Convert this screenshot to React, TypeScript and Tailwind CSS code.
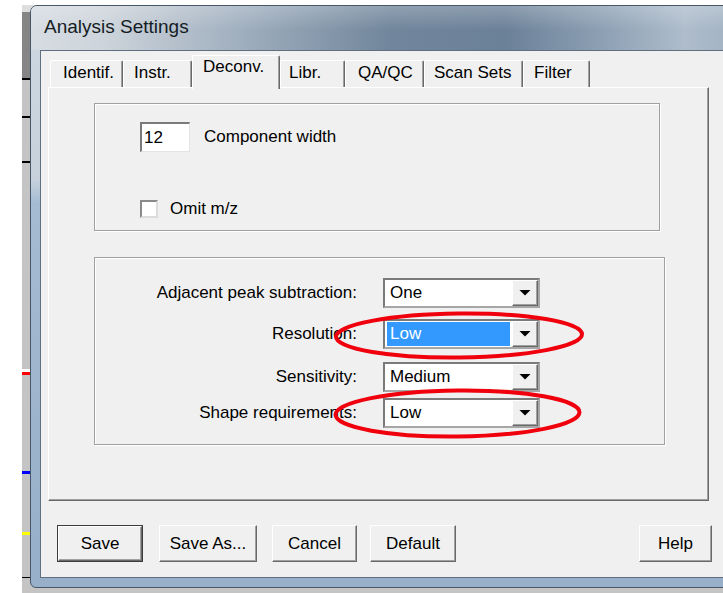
import React from "react";

type Tab = { label: string; cls: string; active?: boolean };

const tabs: Tab[] = [
  { label: "Identif.", cls: "w-[73px] pl-[12px]" },
  { label: "Instr.", cls: "w-[69px] pl-[10px]" },
  { label: "Deconv.", cls: "w-[88px] pl-[10px]", active: true },
  { label: "Libr.", cls: "w-[65px] pl-[8px]" },
  { label: "QA/QC", cls: "w-[79px] pl-[12px]" },
  { label: "Scan Sets", cls: "w-[99px] pl-[9px]" },
  { label: "Filter", cls: "w-[67px] pl-[10px]" },
];

const raised =
  "border border-t-white border-l-white border-r-[#696969] border-b-[#696969] shadow-[inset_-1px_-1px_0_#a0a0a0] bg-[#f0f0f0]";

function TabButton({ tab }: { tab: Tab }) {
  if (tab.active) {
    return (
      <div
        className={`${tab.cls} relative z-10 h-[34px] -mb-[2px] rounded-t-[2px] border-t border-l border-white border-r border-r-[#696969] shadow-[inset_-1px_0_0_#a0a0a0] bg-[#f0f0f0] pt-[1px] leading-[20px]`}
      >
        {tab.label}
      </div>
    );
  }
  return (
    <div
      className={`${tab.cls} h-[27px] rounded-t-[2px] border-t border-l border-white border-r border-r-[#696969] shadow-[inset_-1px_0_0_#a0a0a0] bg-[#f0f0f0] pt-[2px] leading-[20px]`}
    >
      {tab.label}
    </div>
  );
}

function Combo({ value, selected }: { value: string; selected?: boolean }) {
  return (
    <div className="ml-[26px] w-[157px] h-[30px] flex border-2 border-t-[#7a7a7a] border-l-[#7a7a7a] border-r-[#a6a6a6] border-b-[#a6a6a6] bg-white">
      <div className="flex-1 flex">
        {selected ? (
          <div className="flex-1 mx-[2px] my-[1px] bg-[#3399ff] text-white pl-[3px] flex items-center">
            {value}
          </div>
        ) : (
          <div className="flex-1 pl-[5px] flex items-center">{value}</div>
        )}
      </div>
      <div className={`w-[26px] h-full flex items-center justify-center ${raised}`}>
        <svg width="12" height="6" viewBox="0 0 12 6">
          <path d="M0.5 0H11.5L6 5.5Z" fill="#000" />
        </svg>
      </div>
    </div>
  );
}

function Row({ label, children, cls }: { label: string; children: React.ReactNode; cls: string }) {
  return (
    <div className={`flex items-center h-[30px] ${cls}`}>
      <div className="w-[262px] text-right">{label}</div>
      {children}
    </div>
  );
}

function Btn({ label, cls, isDefault }: { label: string; cls: string; isDefault?: boolean }) {
  if (isDefault) {
    return (
      <div className={`${cls} h-[37px] border border-[#3c3c3c] flex`}>
        <div className={`flex-1 flex items-center justify-center ${raised}`}>{label}</div>
      </div>
    );
  }
  return (
    <div className={`${cls} h-[37px] flex items-center justify-center ${raised}`}>{label}</div>
  );
}

export default function App() {
  return (
    <div className="relative w-[723px] h-[593px] overflow-hidden bg-white font-['Liberation_Sans',Arial,sans-serif] text-[17px] text-black">
      {/* application behind the dialog */}
      <div className="pt-[5px] pl-[22px] h-full flex">
        <div className="flex-1 flex flex-col bg-[#c4c4c4]">
          <div className="h-[7px] bg-[#dedede]" />
          <div className="h-[66px] bg-[#858585]" />
          <div className="h-[2px] bg-black" />
          <div className="h-[36px]" />
          <div className="h-[2px] bg-black" />
          <div className="h-[43px]" />
          <div className="h-[2px] bg-black" />
          <div className="h-[206px]" />
          <div className="h-[3px] bg-white" />
          <div className="h-[3px] bg-[#ff0000]" />
          <div className="h-[96px]" />
          <div className="h-[3px] bg-[#0000ff]" />
          <div className="h-[58px]" />
          <div className="h-[3px] bg-[#ffff00]" />
          <div className="h-[42px]" />
          <div className="h-[1px] bg-black" />
        </div>
      </div>

      {/* dialog window */}
      <div className="absolute left-[30px] top-[5px] w-[720px] h-[583px] flex flex-col rounded-t-[7px] rounded-b-[6px] border border-[#46576a] bg-[linear-gradient(to_bottom,#cfd8e1_0%,#c6d1dc_30%,#a4bbd2_34%,#97afc8_100%)]">
        <div className="h-[44px] shrink-0 rounded-t-[6px] flex items-center pl-[13px] pb-[2px] bg-[linear-gradient(to_bottom,rgba(255,255,255,0.22),rgba(255,255,255,0)_55%),linear-gradient(to_right,#d6dce2_0%,#cdd4db_10%,#9eadbd_30%,#71869c_50%,#6b8198_66%,#8ea1b5_80%,#aebccb_91%,#9eafc0_100%)]">
          <span className="text-[19px] text-[#141c24]">Analysis Settings</span>
        </div>

        <div className="ml-[9px] mb-[9px] flex-1 border border-[#5f6f80] bg-[#f0f0f0] flex flex-col pl-[7px] pt-[4px]">
          {/* tab strip */}
          <div className="relative z-10 h-[32px] flex items-end pl-[2px]">
            {tabs.map((t) => (
              <TabButton key={t.label} tab={t} />
            ))}
          </div>

          {/* tab page */}
          <div className="w-[661px] h-[414px] border-t border-l border-white border-r border-b border-r-[#696969] border-b-[#696969] shadow-[inset_-1px_-1px_0_#a0a0a0] flex flex-col pl-[45px] pt-[15px]">
            <div className="w-[566px] h-[128px] border border-[#a0a0a0] shadow-[1px_1px_0_#ffffff,inset_1px_1px_0_#ffffff] flex flex-col pl-[45px] pt-[18px]">
              <div className="flex items-center">
                <div className="w-[50px] h-[30px] bg-white border-t-2 border-l-2 border-t-[#7a7a7a] border-l-[#7a7a7a] border-r border-b border-r-[#e3e3e3] border-b-[#e3e3e3] pl-[2px] flex items-center">
                  12
                </div>
                <span className="ml-[14px]">Component width</span>
              </div>
              <div className="flex items-center mt-[44px]">
                <div className="w-[18px] h-[18px] bg-white border-2 border-t-[#8a8a8a] border-l-[#8a8a8a] border-r-[#dcdcdc] border-b-[#dcdcdc]" />
                <span className="ml-[12px]">Omit m/z</span>
              </div>
            </div>

            <div className="mt-[26px] w-[571px] h-[188px] border border-[#a0a0a0] shadow-[1px_1px_0_#ffffff,inset_1px_1px_0_#ffffff] flex flex-col">
              <Row label="Adjacent peak subtraction:" cls="mt-[20px]">
                <Combo value="One" />
              </Row>
              <Row label="Resolution:" cls="mt-[11px]">
                <Combo value="Low" selected />
              </Row>
              <Row label="Sensitivity:" cls="mt-[13px]">
                <Combo value="Medium" />
              </Row>
              <Row label="Shape requirements:" cls="mt-[6px]">
                <Combo value="Low" />
              </Row>
            </div>
          </div>

          {/* dialog buttons */}
          <div className="mt-[24px] pl-[9px] flex">
            <Btn label="Save" cls="w-[86px]" isDefault />
            <Btn label="Save As..." cls="ml-[16px] w-[98px]" />
            <Btn label="Cancel" cls="ml-[15px] w-[85px]" />
            <Btn label="Default" cls="ml-[13px] w-[86px]" />
            <Btn label="Help" cls="ml-[183px] w-[73px]" />
          </div>
        </div>
      </div>

      {/* red hand-drawn highlight rings */}
      <svg className="absolute left-0 top-0 pointer-events-none" width="723" height="593" viewBox="0 0 723 593">
        <ellipse cx="459" cy="335.5" rx="123" ry="22" fill="none" stroke="#f0000c" strokeWidth="4" transform="rotate(-0.6 459 335.5)" />
        <ellipse cx="457.5" cy="413.5" rx="122" ry="23" fill="none" stroke="#f0000c" strokeWidth="4" transform="rotate(-0.6 457.5 413.5)" />
      </svg>
    </div>
  );
}
